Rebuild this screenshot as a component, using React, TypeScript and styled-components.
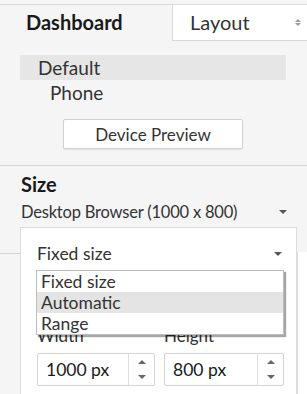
import React from 'react';
import styled, { createGlobalStyle } from 'styled-components';

const GlobalStyle = createGlobalStyle`
  body {
    margin: 0;
    background: #f5f5f5;
    font-family: Lato, 'Open Sans', sans-serif;
    color: #333;
  }
`;

const Pane = styled.div`
  position: relative;
  width: 307px;
  height: 394px;
  overflow: hidden;
  background: #f5f5f5;
`;

const TabBar = styled.div`
  display: flex;
  margin-top: 4px;
  height: 36px;
  border-top: 1px solid #dadada;
`;

const Tab = styled.div<{ $active?: boolean }>`
  display: flex;
  align-items: center;
  box-sizing: border-box;
  font-size: 20px;
  ${(p) =>
    p.$active
      ? `
    flex: 0 0 172px;
    padding: 0 0 2px 26px;
    font-weight: 700;
    color: #1a1a1a;
  `
      : `
    flex: 1;
    padding: 0 6px 1px 17px;
    background: #fff;
    border-left: 1px solid #d8d8d8;
    border-bottom: 1px solid #d8d8d8;
    justify-content: space-between;
  `}
`;

const UpDown = styled.span`
  display: flex;
  flex-direction: column;
  gap: 1px;
  &::before,
  &::after {
    content: '';
    border-left: 3px solid transparent;
    border-right: 3px solid transparent;
  }
  &::before {
    border-bottom: 3px solid #999;
  }
  &::after {
    border-top: 3px solid #999;
  }
`;

const DeviceList = styled.div`
  padding: 14px 21px 0 20px;
`;

const DeviceRow = styled.div<{ $selected?: boolean; $indent: number }>`
  height: 25px;
  line-height: 25px;
  font-size: 19px;
  padding-left: ${(p) => p.$indent}px;
  background: ${(p) => (p.$selected ? '#e6e6e6' : 'transparent')};
`;

const PreviewButton = styled.button`
  display: block;
  margin: 14px 0 0 63px;
  width: 180px;
  height: 30px;
  padding: 0;
  background: #fff;
  border: 1px solid #d0d0d0;
  border-radius: 2px;
  box-shadow: 0 1px 1px rgba(0, 0, 0, 0.08);
  font-family: inherit;
  font-size: 17px;
  color: #333;
`;

const Divider = styled.div<{ $top: number }>`
  margin-top: ${(p) => p.$top}px;
  border-top: 1px solid #d4d4d4;
`;

const SizeSection = styled.div`
  padding: 6px 0 0 21px;
`;

const SectionTitle = styled.div`
  font-size: 20px;
  font-weight: 700;
  color: #1a1a1a;
  line-height: 24px;
`;

const SelectLine = styled.div<{ $arrowRight: number; $size: number; $tight?: boolean }>`
  display: flex;
  align-items: center;
  justify-content: space-between;
  font-size: ${(p) => p.$size}px;
  letter-spacing: ${(p) => (p.$tight ? '-0.2px' : 'normal')};
  padding-right: ${(p) => p.$arrowRight}px;
`;

const Caret = styled.span`
  width: 0;
  height: 0;
  border-left: 4px solid transparent;
  border-right: 4px solid transparent;
  border-top: 4px solid #555;
`;

const Popup = styled.div`
  position: absolute;
  left: 20px;
  top: 227px;
  width: 277px;
  height: 180px;
  box-sizing: border-box;
  background: #fff;
  border: 1px solid #dcdcdc;
  padding: 15px 14px 0 16px;
`;

const RightBehind = styled.div`
  position: absolute;
  left: 297px;
  top: 252px;
  width: 20px;
  height: 160px;
  background: #fff;
  border-left: 1px solid #dcdcdc;
`;

const OptionList = styled.div`
  position: absolute;
  left: 15px;
  top: 42px;
  width: 248px;
  box-sizing: border-box;
  background: #fff;
  border: 1px solid #bdbdbd;
  box-shadow: 2px 2px 1px rgba(0, 0, 0, 0.35);
  z-index: 2;
`;

const Option = styled.div<{ $hover?: boolean }>`
  height: 21px;
  line-height: 21px;
  padding-left: 4px;
  font-size: 17.5px;
  background: ${(p) => (p.$hover ? '#e4e4e4' : '#fff')};
`;

const Fields = styled.div`
  display: grid;
  grid-template-columns: 118px 120px;
  column-gap: 9px;
  margin-top: 63px;
`;

const FieldLabel = styled.div`
  font-size: 17px;
  line-height: 18px;
  margin-bottom: 8px;
`;

const NumberBox = styled.div`
  display: flex;
  height: 33px;
  box-sizing: border-box;
  border: 1px solid #d4d4d4;
  border-radius: 2px;
  background: #fff;
`;

const NumberValue = styled.div`
  flex: 1;
  display: flex;
  align-items: center;
  padding-left: 8px;
  font-size: 17.5px;
  color: #1a1a1a;
`;

const Spinner = styled.div`
  width: 25px;
  display: flex;
  flex-direction: column;
  border-left: 1px solid #dedede;
`;

const SpinHalf = styled.div<{ $down?: boolean }>`
  flex: 1;
  display: flex;
  align-items: center;
  justify-content: center;
  &::after {
    content: '';
    border-left: 4px solid transparent;
    border-right: 4px solid transparent;
    ${(p) => (p.$down ? 'border-top: 4px solid #666;' : 'border-bottom: 4px solid #666;')}
  }
`;

const NumberField: React.FC<{ label: string; value: string }> = ({ label, value }) => (
  <div>
    <FieldLabel>{label}</FieldLabel>
    <NumberBox>
      <NumberValue>{value}</NumberValue>
      <Spinner>
        <SpinHalf />
        <SpinHalf $down />
      </Spinner>
    </NumberBox>
  </div>
);

export default function App() {
  return (
    <Pane>
      <GlobalStyle />
      <TabBar>
        <Tab $active>Dashboard</Tab>
        <Tab>
          Layout
          <UpDown />
        </Tab>
      </TabBar>
      <DeviceList>
        <DeviceRow $selected $indent={18}>Default</DeviceRow>
        <DeviceRow $indent={30}>Phone</DeviceRow>
      </DeviceList>
      <PreviewButton>Device Preview</PreviewButton>
      <Divider $top={16} />
      <SizeSection>
        <SectionTitle>Size</SectionTitle>
        <SelectLine $arrowRight={20} $size={16.5} $tight style={{ marginTop: 6 }}>
          Desktop Browser (1000 x 800)
          <Caret />
        </SelectLine>
      </SizeSection>
      <Divider $top={31} />
      <RightBehind />
      <Popup>
        <SelectLine $arrowRight={0} $size={17.5}>
          Fixed size
          <Caret />
        </SelectLine>
        <OptionList>
          <Option>Fixed size</Option>
          <Option $hover>Automatic</Option>
          <Option>Range</Option>
        </OptionList>
        <Fields>
          <NumberField label="Width" value="1000 px" />
          <NumberField label="Height" value="800 px" />
        </Fields>
      </Popup>
    </Pane>
  );
}
